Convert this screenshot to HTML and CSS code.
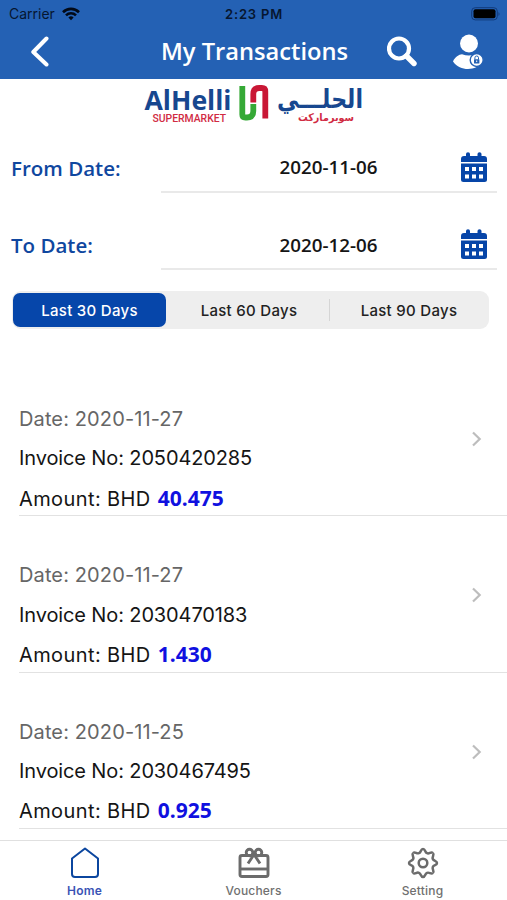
FILE: index.html
```
<!DOCTYPE html>
<html lang="en">
<head>
  <meta charset="UTF-8" />
  <meta name="viewport" content="width=device-width, initial-scale=1.0"/>
  <title>My Transactions</title>
  <link rel="stylesheet" href="styles.css">
</head>
<body>

  <!-- HEADER -->
  <header>
    <div class="status-bar">
      <div class="carrier">
        <span>Carrier</span>
        <svg width="18" height="14" viewBox="0 0 18 14" fill="none" stroke="#020a18" stroke-width="2.6">
          <path d="M1 5.2C5.5.8 12.500.8 17 5.200"/>
          <path d="M4 8.400c2.800-2.800 7.200-2.800 10 0"/>
          <path d="M6.400 10.400a3.800 3.800 0 0 1 5.200 0L9 13.200z" fill="#020a18" stroke="none"/>
        </svg>
      </div>
      <span class="time">2:23 PM</span>
      <svg class="battery" width="30" height="14" viewBox="0 0 30 14">
        <rect x=".7" y=".7" width="25.600" height="12.200" rx="3.500" fill="none" stroke="#123b7c"/>
        <rect x="2.500" y="2.300" width="22" height="9" rx="2" fill="#000"/>
        <path d="M27.500 5v4q2-2 0-4" fill="#123b7c"/>
      </svg>
    </div>
    <div class="nav-bar">
      <svg class="back" width="20" height="32" viewBox="0 0 20 32" fill="none" stroke="#fff" stroke-width="4" stroke-linecap="round" stroke-linejoin="round">
        <path d="M16.500 3.500L3.300 17l13.200 12.500"/>
      </svg>
      <h1>My Transactions</h1>
      <svg class="search" width="32" height="32" viewBox="0 0 32 32" fill="none" stroke="#fff">
        <circle cx="12" cy="13.500" r="10" stroke-width="4.200"/>
        <path d="M19.500 21l7.500 7.500" stroke-width="5.400" stroke-linecap="round"/>
      </svg>
      <svg class="user" width="32" height="36" viewBox="0 0 32 36">
        <circle cx="16" cy="10.500" r="9" fill="#fff"/>
        <path d="M0 28.500c2-4.500 6-7 9-7.200q7 2.500 13 0c3 0 5 3 7 7C26 34 21 36 15 36S4 34 0 28.500z" fill="#fff"/>
        <circle cx="23.700" cy="27" r="6.500" fill="#fff" stroke="#2461b4" stroke-width="1.400"/>
        <rect x="21" y="26.200" width="5.400" height="4.300" rx=".5" fill="#2461b4"/>
        <path d="M21.900 26.500v-1.700a1.800 1.800 0 0 1 3.600 0v1.700" fill="none" stroke="#2461b4"/>
        <path d="M23.700 27.500v1.600" stroke="#fff"/>
      </svg>
    </div>
  </header>

  <!-- LOGO -->
  <div class="logo">
    <svg width="240" height="50" viewBox="0 0 240 50">
      <text class="logo-name" x="9.500" y="31" textLength="87" lengthAdjust="spacingAndGlyphs">AlHelli</text>
      <text class="logo-sub" x="17.500" y="42.500" textLength="73.500" lengthAdjust="spacingAndGlyphs">SUPERMARKET</text>
      <g fill="none" stroke-width="5.800">
        <path d="M107.300 7v28.500q0 3 3 3h1.700q6.300 0 6.300-6.500v-7" stroke="#35a936"/>
        <path d="M118.300 23.500V15q0-6 6-6h2.500q3.500 0 3.500 3.500V39.500" stroke="#c91735"/>
      </g>
      <text class="logo-name arabic" x="142" y="29" textLength="86" lengthAdjust="spacingAndGlyphs">الحلـــي</text>
      <text class="logo-sub arabic" x="163" y="42" textLength="56" lengthAdjust="spacingAndGlyphs">سوبرماركت</text>
    </svg>
  </div>

  <!-- DATE FILTER -->
  <div class="dates">
    <div class="date-row">
      <label>From Date:</label>
      <div class="date-field">
        <span>2020-11-06</span>
        <svg width="28" height="32" viewBox="0 0 28 32">
          <path d="M1 11V8q0-3 3-3h2V3q0-1.700 2-1.700T10 3v2h7.500V3q0-1.700 2-1.700t2 1.700v2H24q3 0 3 3v3z" fill="#0645a8"/>
          <path d="M1 12.500h26V28.500q0 2.500-2.500 2.500h-21Q1 31 1 28.500z" fill="#0645a8"/>
          <path d="M5 16h4v4H5zM12 16h4v4h-4zM19 16h4v4h-4zM5 23.500h4v4H5zM12 23.500h4v4h-4zM19 23.500h4v4h-4z" fill="#fff"/>
        </svg>
      </div>
    </div>
    <div class="date-row">
      <label class="to">To Date:</label>
      <div class="date-field">
        <span>2020-12-06</span>
        <svg width="28" height="32" viewBox="0 0 28 32">
          <path d="M1 10V7q0-3 3-3h2V2q0-1.700 2-1.700T10 2v2h7.500V2q0-1.700 2-1.700t2 1.700v2H24q3 0 3 3v3z" fill="#0645a8"/>
          <path d="M1 11.500h26v16q0 2.500-2.500 2.500h-21Q1 30 1 27.500z" fill="#0645a8"/>
          <path d="M5 15h4v4H5zM12 15h4v4h-4zM19 15h4v4h-4zM5 22.500h4v4H5zM12 22.500h4v4h-4zM19 22.500h4v4h-4z" fill="#fff"/>
        </svg>
      </div>
    </div>
  </div>

  <div class="segments">
    <button class="active">Last 30 Days</button>
    <button>Last 60 Days</button>
    <button class="divided">Last 90 Days</button>
  </div>

  <!-- TRANSACTIONS -->
  <main>
    <div class="item">
      <div>
        <p class="item-date">Date: 2020-11-27</p>
        <p class="invoice">Invoice No: 2050420285</p>
        <p class="amount">Amount: BHD <b>40.475</b></p>
      </div>
      <svg width="12" height="16" viewBox="0 0 12 16"><path d="M2 1.500L8.700 8 2 14.500"/></svg>
    </div>
    <div class="item">
      <div>
        <p class="item-date">Date: 2020-11-27</p>
        <p class="invoice">Invoice No: 2030470183</p>
        <p class="amount">Amount: BHD <b>1.430</b></p>
      </div>
      <svg width="12" height="16" viewBox="0 0 12 16"><path d="M2 1.500L8.700 8 2 14.500"/></svg>
    </div>
    <div class="item">
      <div>
        <p class="item-date">Date: 2020-11-25</p>
        <p class="invoice">Invoice No: 2030467495</p>
        <p class="amount">Amount: BHD <b>0.925</b></p>
      </div>
      <svg width="12" height="16" viewBox="0 0 12 16"><path d="M2 1.500L8.700 8 2 14.500"/></svg>
    </div>
  </main>

  <!-- TAB BAR -->
  <nav>
    <a class="tab selected">
      <svg width="34" height="34" viewBox="-17 -17 34 34">
        <path d="M0-14.500L13-4.500V11q0 3-3 3h-20q-3 0-3-3V-4.500z"/>
      </svg>
      <span>Home</span>
    </a>
    <a class="tab">
      <svg class="gift" width="34" height="34" viewBox="-17 -17 34 34">
        <path d="M-7-7.500h-5q-2 0-2 2v17q0 2 2 2h24q2 0 2-2v-17q0-2-2-2H-7"/>
        <path d="M-14 6h28"/>
        <circle cx="-4.500" cy="-10.500" r="3.300"/>
        <circle cx="4.500" cy="-10.500" r="3.300"/>
        <path d="M0-8.500L-6 .5M0-8.500L6 .5"/>
      </svg>
      <span>Vouchers</span>
    </a>
    <a class="tab">
      <svg width="34" height="34" viewBox="-17 -17 34 34">
        <path id="tooth" d="M0-14C2.600-14 1.660-10.800 4.060-9.800S8.060-11.740 9.900-9.900"/>
        <use href="#tooth" transform="rotate(45)"/>
        <use href="#tooth" transform="rotate(90)"/>
        <use href="#tooth" transform="rotate(135)"/>
        <use href="#tooth" transform="rotate(180)"/>
        <use href="#tooth" transform="rotate(225)"/>
        <use href="#tooth" transform="rotate(270)"/>
        <use href="#tooth" transform="rotate(315)"/>
        <circle r="4.300"/>
      </svg>
      <span>Setting</span>
    </a>
  </nav>

</body>
</html>
```
FILE: styles.css
```
* {
  box-sizing: border-box;
}

body {
  font-family: Inter, sans-serif;
  background-color: #fff;
  margin: 0;
  height: 900px;
  display: flex;
  flex-direction: column;
  overflow: hidden;
  color: #151515;
}

/* Header */
header {
  height: 79px;
  flex-shrink: 0;
  background-color: #2461b4;
}

.status-bar {
  display: grid;
  grid-template-columns: 1fr auto 1fr;
  align-items: center;
  height: 27px;
  padding: 0 6px 0 9px;
  color: #061630;
  font-size: 14px;
}

.carrier {
  display: flex;
  align-items: center;
  gap: 7px;
}

.time {
  margin-right: 2px;
  font-size: 13px;
  font-weight: 600;
  letter-spacing: 0.8px;
}

.battery {
  justify-self: end;
}

.nav-bar {
  display: flex;
  align-items: center;
  height: 52px;
  padding: 0 22px 4px 30px;
}

h1 {
  margin: -1px 38px 0 111px;
  width: 188px;
  font-family: "Open Sans", sans-serif;
  font-size: 23.7px;
  font-weight: 600;
  white-space: nowrap;
  color: #fff;
}

.user {
  margin-left: auto;
}

/* Logo */
.logo {
  display: flex;
  height: 50px;
  padding-left: 135px;
  flex-shrink: 0;
}

.logo-name {
  font-family: "Open Sans", sans-serif;
  font-size: 26px;
  font-weight: 700;
  fill: #17478f;
}

.logo-sub {
  font-family: Roboto, sans-serif;
  font-size: 10.5px;
  font-weight: 500;
  fill: #d12b43;
}

.arabic {
  font-family: "DejaVu Sans", sans-serif;
  font-weight: 700;
}

/* Date filter */
.dates {
  padding: 9px 10px 0 11px;
}

.date-row {
  display: flex;
  height: 77.5px;
}

label {
  width: 150px;
  padding-top: 16px;
  font-family: "Open Sans", sans-serif;
  font-size: 20.5px;
  font-weight: 600;
  color: #0f479f;
}

label.to {
  padding-top: 15px;
}

.date-field {
  flex: 1;
  display: flex;
  align-items: center;
  height: 54.5px;
  padding: 6px 9px 0 0;
  border-bottom: 2px solid #e9e9e9;
}

.date-field span {
  flex: 1;
  padding-left: 36px;
  text-align: center;
  font-family: "Open Sans", sans-serif;
  font-size: 18.8px;
  font-weight: 600;
}

/* Segmented control */
.segments {
  display: flex;
  align-items: center;
  height: 38px;
  margin: -2px 18px 0 12px;
  padding: 1px;
  border-radius: 9px;
  background-color: #eee;
  flex-shrink: 0;
}

button {
  flex: 1;
  height: 34px;
  padding: 0 0 0 3px;
  border: none;
  border-radius: 7px;
  background: none;
  font-family: Inter, sans-serif;
  font-size: 15px;
  font-weight: 500;
  letter-spacing: 0.3px;
  color: #222;
}

.active {
  flex: 0 0 153px;
  padding: 0;
  background-color: #0646aa;
  color: #fff;
}

.divided {
  position: relative;
  padding: 0;
  margin-right: -1px;
}

.divided::before {
  content: "";
  position: absolute;
  left: 0;
  top: 6px;
  width: 1px;
  height: 22px;
  background-color: #d5d5d5;
}

/* Transactions */
main {
  padding-top: 31px;
  flex: 1;
  min-height: 0;
}

.item {
  display: flex;
  justify-content: space-between;
  height: 156.3px;
  margin-left: 19px;
  padding: 40px 24px 0 0;
  border-bottom: 1.5px solid #e2e2e2;
}

.item p {
  margin: 0;
  height: 39.3px;
  line-height: 39.3px;
  font-size: 20px;
  letter-spacing: -0.12px;
  white-space: nowrap;
}

.item .item-date {
  letter-spacing: 0.12px;
  color: #666;
}

.item .amount {
  letter-spacing: 0.4px;
}

.amount b {
  margin-left: 1px;
  font-family: "Open Sans", sans-serif;
  font-size: 21px;
  font-weight: 700;
  letter-spacing: 0;
  color: #1010e0;
}

.item svg {
  margin-top: 31px;
  fill: none;
  stroke: #bdbdbd;
  stroke-width: 2.2;
}

/* Tab bar */
nav {
  display: grid;
  grid-template-columns: repeat(3, 1fr);
  height: 60px;
  flex-shrink: 0;
  border-top: 1px solid #e0e0e0;
  background-color: #fff;
}

.tab {
  display: flex;
  flex-direction: column;
  align-items: center;
  padding-top: 5px;
  font-size: 12px;
  font-weight: 500;
  letter-spacing: 0.2px;
  color: #707070;
}

.tab svg {
  fill: none;
  stroke: #6b6b6b;
  stroke-width: 2.5;
  stroke-linejoin: round;
}

.tab .gift {
  stroke-width: 2.9;
}

.tab span {
  margin-top: 3px;
}

.tab.selected {
  font-weight: 600;
  color: #3a53b5;
}

.selected svg {
  stroke: #0b469f;
  stroke-width: 2;
}
```
